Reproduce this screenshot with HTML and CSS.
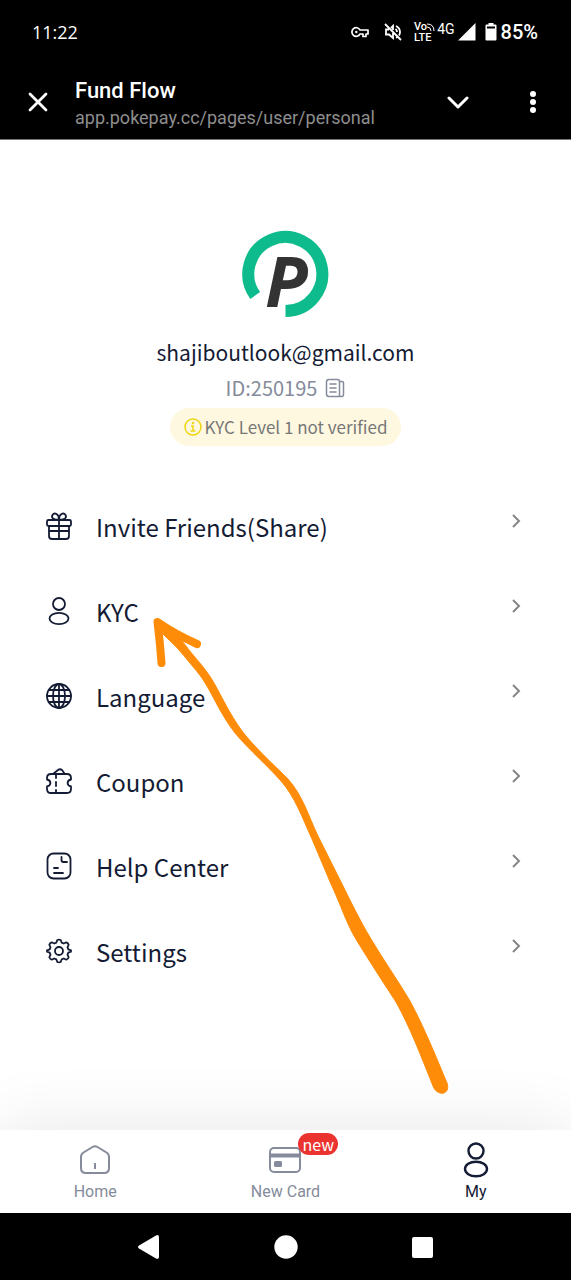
FILE: index.html
```html
<!DOCTYPE html>
<html lang="en">
<head>
<meta charset="utf-8">
<meta name="viewport" content="width=device-width, initial-scale=1">
<title>Fund Flow</title>
<link rel="stylesheet" href="styles.css">
</head>
<body>
<div class="status-bar">
  <time class="clock">11:22</time>
  <div class="status-icons">
    <svg class="key-icon" width="18" height="12" viewBox="0 0 18 12" fill="none" stroke="#fff" stroke-width="1.700"><path d="M9 4a4.300 4.300 0 1 0 0 4h3v2.500h3V8h2V4H9z" stroke-linejoin="round"/><circle cx="5.300" cy="6" r="1.200" fill="#fff" stroke="none"/></svg>
    <svg class="mute-icon" width="18" height="18" viewBox="0 0 18 18" fill="none" stroke="#fff" stroke-width="1.800"><path d="M1 1l16 16M5 6.500H2v5h3l4 3.500V10M7 5l2-2v4M11.500 6q1.500 1 1.500 3M12 3q4 2 4 6 0 2-1 3.500M12 14.800l1-.5"/></svg>
    <span class="volte"><span class="volte-top">Vo<svg width="8" height="8" viewBox="0 0 8 8" fill="none" stroke="#fff" stroke-width="1"><path d="M0 1q7 0 7 7M0 4q4 0 4 4"/></svg></span><span>LTE</span></span>
    <span class="network">4G</span>
    <svg width="18" height="18" viewBox="0 0 18 18"><path d="M17.500 0v17.500H0z" fill="#fff"/></svg>
    <svg class="battery-icon" width="12" height="18" viewBox="0 0 12 18"><path d="M3.500 0h5v2h-5zM1.500 1.500h9q1 0 1 1V3.500H.5v-1q0-1 1-1zM.5 3h1.500v3H.5zM10 3h1.500v3H10zM.5 5.500h11V16.500q0 1-1 1h-9q-1 0-1-1z" fill="#fff"/></svg>
    <span class="charge">85%</span>
  </div>
</div>
<header class="browser-bar">
  <button class="icon-button" type="button" aria-label="Close"><svg width="20" height="20" viewBox="0 0 20 20" fill="none" stroke="#fff" stroke-width="2.800" stroke-linecap="round"><path d="M2 2l16 16M18 2L2 18"/></svg></button>
  <div class="page-info">
    <h1 class="page-title">Fund Flow</h1>
    <div class="page-url">app.pokepay.cc/pages/user/personal</div>
  </div>
  <button class="icon-button" type="button" aria-label="Minimize"><svg width="22" height="14" viewBox="0 0 22 14" fill="none" stroke="#fff" stroke-width="3" stroke-linecap="round" stroke-linejoin="round"><path d="M2 3l9 9 9-9"/></svg></button>
  <button class="icon-button more" type="button" aria-label="More"><svg width="8" height="24" viewBox="0 0 8 24" fill="#fff"><circle cx="4" cy="4" r="3"/><circle cx="4" cy="12" r="3"/><circle cx="4" cy="20" r="3"/></svg></button>
</header>
<main class="content">
  <section class="profile">
    <svg class="logo" width="88" height="88" viewBox="0 0 88 88" role="img" aria-label="PokePay">
      <path d="M13.200 65.500A37 37 0 1 1 43.500 81" fill="none" stroke="#0dbb8c" stroke-width="12"/>
      <text class="logo-letter" x="23" y="77">P</text>
    </svg>
    <p class="email">shajiboutlook@gmail.com</p>
    <p class="user-id">ID:250195
      <button class="copy-button" type="button" aria-label="Copy ID"><svg width="20" height="20" viewBox="0 0 20 20" fill="none" stroke="#858b9b" stroke-width="1.500" stroke-linecap="round" stroke-linejoin="round"><path d="M4 1.500h8.500q2 0 2 2v15H4q-2.500 0-2.500-2.500V4Q1.500 1.500 4 1.500zM14.500 3.500H17q1.500 0 1.500 1.500v11.500q0 2-2 2h-2M5 6h6M5 10h6M5 14h6"/></svg></button>
    </p>
    <a class="kyc-badge" href="#kyc"><svg width="18" height="18" viewBox="0 0 18 18" fill="none" stroke="#ecd515" stroke-width="1.500"><circle cx="9" cy="9" r="8"/><path d="M7 8h2v5M6.500 13h5"/><circle cx="9" cy="5" r="1.200" fill="#ecd515" stroke="none"/></svg>KYC Level 1 not verified</a>
  </section>
  <nav class="menu" aria-label="Account">
    <a class="menu-item" href="#invite">
      <svg class="menu-icon" viewBox="0 0 28 30"><rect x="2" y="9" width="24" height="6" rx="1.500"/><path d="M4 15v10q0 3 3 3h14q3 0 3-3V15M14 9v19M4 20h20M14 8.500C8 9 6 6.500 7.500 4 9.500 1 14 3 14 8.500 14 3 18.500 1 20.500 4 22 6.500 20 9 14 8.500z"/></svg>
      <span class="menu-label">Invite Friends(Share)</span><svg class="chevron" viewBox="0 0 10 16"><path d="M2 2l6 6-6 6"/></svg>
    </a>
    <a class="menu-item" href="#kyc">
      <svg class="menu-icon" viewBox="0 0 28 30"><circle cx="14" cy="8" r="6"/><ellipse cx="14" cy="22.500" rx="9.500" ry="5.700"/></svg>
      <span class="menu-label">KYC</span><svg class="chevron" viewBox="0 0 10 16"><path d="M2 2l6 6-6 6"/></svg>
    </a>
    <a class="menu-item" href="#language">
      <svg class="menu-icon" viewBox="0 0 28 30"><circle cx="14" cy="15" r="12"/><ellipse cx="14" cy="15" rx="6" ry="12"/><path d="M14 3v24M2 15h24M4 9h20M4 21h20"/></svg>
      <span class="menu-label">Language</span><svg class="chevron" viewBox="0 0 10 16"><path d="M2 2l6 6-6 6"/></svg>
    </a>
    <a class="menu-item" href="#coupon">
      <svg class="menu-icon" viewBox="0 0 28 30"><path d="M6 8h16q4 0 4 4v1.500c-4.500 1-4.500 6 0 7V23q0 4-4 4H6q-4 0-4-4v-2.500c4.500-1 4.500-6 0-7V12q0-4 4-4zM8 8l5-4q2-1.500 4 0l2.500 3.500M11 9v3M11 16v4M11 24v3"/></svg>
      <span class="menu-label">Coupon</span><svg class="chevron" viewBox="0 0 10 16"><path d="M2 2l6 6-6 6"/></svg>
    </a>
    <a class="menu-item" href="#help">
      <svg class="menu-icon" viewBox="0 0 28 30"><rect x="2.500" y="2.500" width="23" height="25" rx="6"/><path d="M16.500 6v3q0 2 2 2H22M9 17h4M9 22h9"/></svg>
      <span class="menu-label">Help Center</span><svg class="chevron" viewBox="0 0 10 16"><path d="M2 2l6 6-6 6"/></svg>
    </a>
    <a class="menu-item" href="#settings">
      <svg class="menu-icon" viewBox="0 0 28 30"><circle cx="14" cy="15" r="4"/><path d="M12.300 4q1.700-.8 3.400 0l1 2.700 2 .8 2.600-1.200q1.800.6 2.400 2.400l-1.200 2.600.8 2 2.700 1v1.400l-2.700 1-.8 2 1.200 2.600q-.6 1.800-2.400 2.400l-2.600-1.200-2 .8-1 2.700q-1.700.8-3.400 0l-1-2.700-2-.8-2.600 1.200q-1.800-.6-2.400-2.400l1.200-2.600-.8-2-2.700-1v-1.400l2.700-1 .8-2-1.200-2.600q.6-1.800 2.400-2.400l2.600 1.200 2-.8z"/></svg>
      <span class="menu-label">Settings</span><svg class="chevron" viewBox="0 0 10 16"><path d="M2 2l6 6-6 6"/></svg>
    </a>
  </nav>
  <svg class="arrow" width="320" height="510" viewBox="140 600 320 510" aria-hidden="true">
    <path class="arrow-head" d="M161.500 663Q160 642 157.500 622 175 634 197 644"/>
    <path class="arrow-shaft" d="M154 625C165 637 176 645 185 657C193 667 201 675 207 686C215 700 222 716 235 733C250 751 267 765 281 781C295 797 302 817 312 839L331 884C341 905 346 923 357 941C370 962 383 982 396 1002C410 1027 421 1056 433 1086C437 1097 451 1095 447 1083C436 1057 425 1029 410 1001C397 979 384 961 371 939C359 919 351 902 340 880L318 836C308 815 303 796 288 779C273 764 256 749 242 731C229 713 222 697 214 683C206 669 197 660 189 650C180 637 170 630 159 620Z"/>
  </svg>
</main>
<nav class="tab-bar" aria-label="Main">
  <a class="tab" href="#home"><span class="tab-icon"><svg width="32" height="34" viewBox="0 0 32 34"><path d="M13.500 4q2.500-1.500 5 0l9 5.500q2.500 1.500 2.500 4.500v11q0 5-5 5H7q-5 0-5-5V14q0-3 2.500-4.500zM16 20v6"/></svg></span>Home</a>
  <a class="tab" href="#card"><span class="tab-icon"><svg width="34" height="34" viewBox="0 0 34 34"><rect x="2" y="5" width="30" height="24" rx="4"/><path d="M2 12.500h30" stroke-width="4"/><rect x="7.500" y="19.500" width="5" height="3" stroke-width="3" stroke-linejoin="round"/></svg><span class="new-badge">new</span></span>New Card</a>
  <a class="tab active" href="#my" aria-current="page"><span class="tab-icon"><svg width="28" height="36" viewBox="0 0 28 36"><circle cx="14" cy="9" r="7.500"/><ellipse cx="14" cy="27" rx="11" ry="7.300"/></svg></span>My</a>
</nav>
<nav class="system-bar" aria-label="System">
  <button class="system-button" type="button" aria-label="Back"><svg width="24" height="26" viewBox="0 0 24 26" fill="#fff"><path d="M18 1.500q3-1.500 3 2v19q0 3.500-3 2L1 14.500q-2-1.500 0-3z"/></svg></button>
  <button class="system-button" type="button" aria-label="Home"><svg width="24" height="26" viewBox="0 0 24 26" fill="#fff"><circle cx="12" cy="13" r="11.700"/></svg></button>
  <button class="system-button" type="button" aria-label="Recent"><svg width="24" height="26" viewBox="0 0 24 26" fill="#fff"><rect x="2" y="3" width="21" height="21" rx="2"/></svg></button>
</nav>
</body>
</html>
```
FILE: styles.css
```css
* { box-sizing: border-box; }
body {
  margin: 0;
  min-height: 100vh;
  display: flex;
  flex-direction: column;
  overflow-x: hidden;
  background: #fff;
  color: #141b34;
  font-family: "Noto Sans CJK SC", "Noto Sans", sans-serif;
}
a { color: inherit; text-decoration: none; }
button { margin: 0; padding: 0; border: 0; background: none; font: inherit; cursor: pointer; }
svg { display: block; flex: none; }
h1, p { margin: 0; }

.status-bar {
  display: flex;
  align-items: center;
  justify-content: space-between;
  height: 64px;
  padding: 0 33px 0 32px;
  background: #000;
  color: #fff;
  font-family: Roboto, sans-serif;
}
.clock { font: 500 18px "Open Sans", sans-serif; }
.status-icons { display: flex; align-items: center; }
.key-icon { margin-right: 15px; }
.mute-icon { margin-right: 12px; }
.volte { display: flex; flex-direction: column; font-size: 11px; font-weight: 500; line-height: 11px; }
.volte-top { display: flex; align-items: center; }
.network { margin: 0 3px 6px 2px; font-size: 14px; font-weight: 400; line-height: 14px; }
.battery-icon { margin: 0 4px 0 9px; }
.charge { font-size: 20px; font-weight: 500; }

.browser-bar {
  display: flex;
  align-items: center;
  height: 76px;
  padding: 0 18px;
  border-bottom: 1px solid #777;
  background: #000;
  color: #fff;
  font-family: Roboto, sans-serif;
}
.icon-button { display: flex; align-items: center; justify-content: center; width: 40px; height: 48px; }
.icon-button.more { margin-left: 35px; }
.page-info { flex: 1; min-width: 0; padding: 3px 0 0 17px; }
.page-title { font-size: 22px; font-weight: 500; line-height: 28px; }
.page-url { color: #8e8e8e; font-size: 18px; line-height: 25px; }

.content { position: relative; flex: 1; padding: 90px 40px 60px; }
.profile { display: flex; flex-direction: column; align-items: center; }
.logo { overflow: visible; }
.logo-letter { fill: #333; font: italic 700 70px "Noto Sans", sans-serif; }
.email { margin-top: 16px; font-size: 21px; line-height: 36px; }
.user-id { display: flex; align-items: center; gap: 8px; color: #858b9b; font-size: 20px; line-height: 36px; }
.kyc-badge {
  display: flex;
  align-items: center;
  gap: 3px;
  margin-top: 2px;
  padding: 0 14px;
  border-radius: 19px;
  background: #fff8e0;
  color: #777;
  font-size: 17px;
  line-height: 38px;
}
.menu { margin-top: 39px; }
.menu-item { display: flex; align-items: center; height: 85px; }
.menu-icon { width: 28px; height: 30px; margin: 0 23px 4px 5px; fill: none; stroke: #141b34; stroke-width: 1.8; stroke-linecap: round; stroke-linejoin: round; }
.menu-label { flex: 1; padding-bottom: 2px; font-size: 24px; line-height: 36px; }
.chevron { width: 10px; height: 16px; margin: 0 10px 14px; fill: none; stroke: #868686; stroke-width: 2; }
.arrow { position: absolute; top: 460px; left: 140px; pointer-events: none; }
.arrow-head { fill: none; stroke: #ff8c08; stroke-width: 8; stroke-linecap: round; stroke-linejoin: round; }
.arrow-shaft { fill: #ff8c08; stroke: #ff8c08; stroke-width: 1; }

.tab-bar {
  display: flex;
  height: 83px;
  background: #fff;
  box-shadow: 0 0 70px rgba(0, 0, 0, 0.1);
  color: #858b9b;
  font-family: Roboto, sans-serif;
  font-size: 16px;
  line-height: 20px;
}
.tab { flex: 1; display: flex; flex-direction: column; align-items: center; padding-top: 12px; }
.tab.active { color: #141b34; }
.tab-icon { position: relative; display: flex; align-items: center; height: 36px; margin-bottom: 4px; }
.tab-icon svg { fill: none; stroke: currentColor; stroke-width: 2; }
.tab.active svg { stroke-width: 2.4; }
.new-badge {
  position: absolute;
  left: 30px;
  top: -9px;
  padding: 0 4px;
  border-radius: 11px;
  background: #eb3430;
  color: #fff;
  font: 16px/22px "Noto Sans CJK SC", sans-serif;
}
.system-bar {
  position: relative;
  display: flex;
  justify-content: center;
  gap: 112px;
  height: 67px;
  background: #000;
}
.system-button { display: flex; align-items: center; }
```
